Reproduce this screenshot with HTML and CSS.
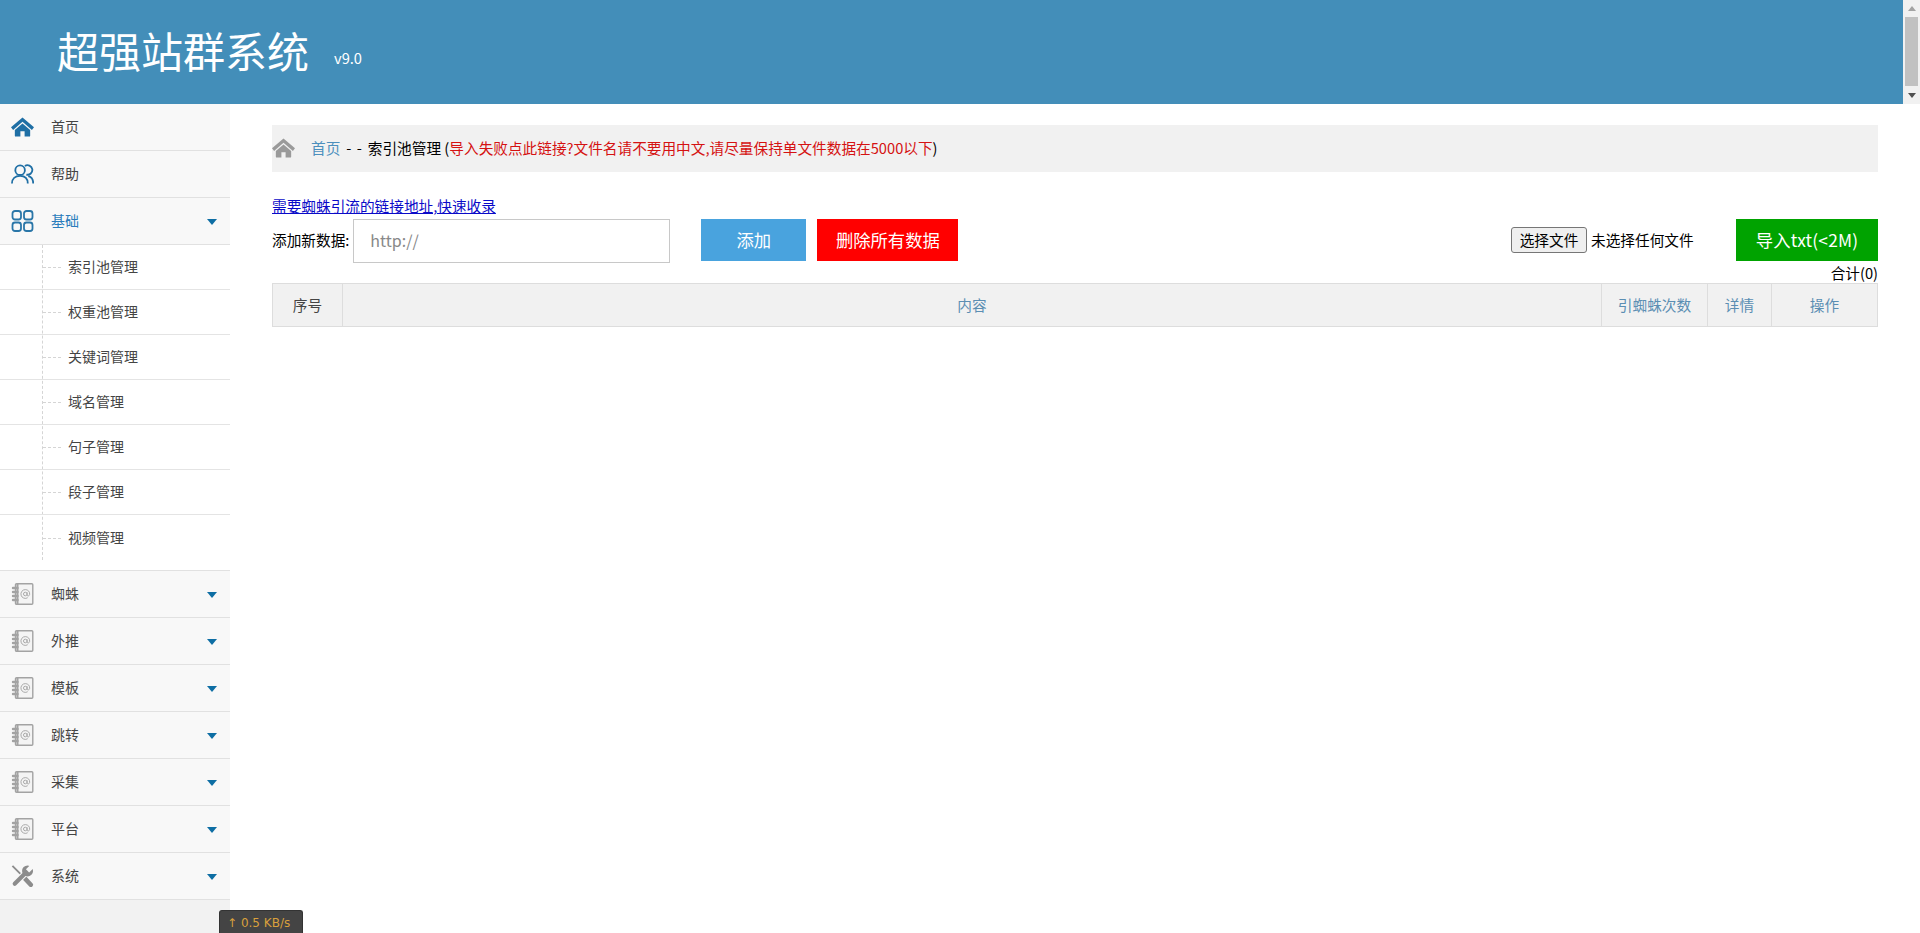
FILE: index.html
```html
<!DOCTYPE html>
<html lang="zh-CN">
<head>
<meta charset="utf-8">
<title>超强站群系统</title>
<link rel="stylesheet" href="styles.css">
</head>
<body>
<svg class="defs" width="0" height="0" aria-hidden="true">
  <symbol id="i-book" viewBox="0 0 22 22">
    <rect x="4" y="0.7" width="17.300" height="20.600" rx="1" fill="#f4f4f4" stroke="#a3a3a3" stroke-width="1.400"/>
    <path d="M6 1v20" stroke="#a3a3a3" stroke-width="2"/>
    <path d="M1.500 5h4.500M1.500 9h4.500M1.500 13h4.500M1.500 17h4.500" stroke="#a3a3a3" stroke-width="2.400" stroke-linecap="round"/>
    <circle cx="13.800" cy="11" r="1.800" fill="none" stroke="#aaa" stroke-width="1"/>
    <path d="M15.600 9.200v2.800c0 1.300 2.200 1.300 2.500-.4.500-2.700-1.500-5-4.300-5a4.400 4.400 0 1 0 2.400 8.100" fill="none" stroke="#aaa" stroke-width="1"/>
  </symbol>
  <symbol id="i-caret" viewBox="0 0 10 6"><path d="M0 0h10L5 6z" fill="#0e6ea4"/></symbol>
  <symbol id="i-home" viewBox="0 0 24 20">
    <path d="M12 0 0 10.300l2.200 2.700L12 4.600 21.800 13 24 10.300z"/>
    <path d="M12 6.300 4 13.200V19a1 1 0 0 0 1 1h4.800v-5.500h4.400V20H19a1 1 0 0 0 1-1v-5.800z"/>
  </symbol>
</svg>
<header class="top">
  <div class="brand"><span class="brand-name">超强站群系统</span><span class="brand-ver">v9.0</span></div>
  <div class="scrollbar">
    <span class="arrow-up"></span>
    <span class="thumb"></span>
    <span class="arrow-down"></span>
  </div>
</header>
<div class="body-wrap">
  <nav class="side">
    <a class="menu-item"><svg class="ico ico-blue"><use href="#i-home"/></svg><span class="menu-label">首页</span></a>
    <a class="menu-item"><svg class="ico" viewBox="0 0 24 20" fill="none" stroke="#1f6fa5" stroke-width="1.900"><circle cx="9.500" cy="6" r="5"/><path d="M14.500 1.600a5 5 0 1 1 1.500 9M1 20c0-5 3.300-8 8.500-8s8 3 8 8M18 12.200c3.300.7 5.200 3.600 5.200 7.800"/></svg><span class="menu-label">帮助</span></a>
    <a class="menu-item is-open"><svg class="ico" viewBox="0 0 22 22" fill="none" stroke="#2a76a8" stroke-width="1.800"><rect x="1" y="1" width="8.500" height="8.500" rx="2.500"/><rect x="12.500" y="1" width="8.500" height="8.500" rx="2.500"/><rect x="1" y="12.500" width="8.500" height="8.500" rx="2.500"/><rect x="12.500" y="12.500" width="8.500" height="8.500" rx="2.500"/></svg><span class="menu-label">基础</span><svg class="caret"><use href="#i-caret"/></svg></a>
    <ul class="submenu">
      <li class="sub-item"><span class="sub-dash"></span>索引池管理</li>
      <li class="sub-item"><span class="sub-dash"></span>权重池管理</li>
      <li class="sub-item"><span class="sub-dash"></span>关键词管理</li>
      <li class="sub-item"><span class="sub-dash"></span>域名管理</li>
      <li class="sub-item"><span class="sub-dash"></span>句子管理</li>
      <li class="sub-item"><span class="sub-dash"></span>段子管理</li>
      <li class="sub-item"><span class="sub-dash"></span>视频管理</li>
    </ul>
    <a class="menu-item"><svg class="ico"><use href="#i-book"/></svg><span class="menu-label">蜘蛛</span><svg class="caret"><use href="#i-caret"/></svg></a>
    <a class="menu-item"><svg class="ico"><use href="#i-book"/></svg><span class="menu-label">外推</span><svg class="caret"><use href="#i-caret"/></svg></a>
    <a class="menu-item"><svg class="ico"><use href="#i-book"/></svg><span class="menu-label">模板</span><svg class="caret"><use href="#i-caret"/></svg></a>
    <a class="menu-item"><svg class="ico"><use href="#i-book"/></svg><span class="menu-label">跳转</span><svg class="caret"><use href="#i-caret"/></svg></a>
    <a class="menu-item"><svg class="ico"><use href="#i-book"/></svg><span class="menu-label">采集</span><svg class="caret"><use href="#i-caret"/></svg></a>
    <a class="menu-item"><svg class="ico"><use href="#i-book"/></svg><span class="menu-label">平台</span><svg class="caret"><use href="#i-caret"/></svg></a>
    <a class="menu-item"><svg class="ico" viewBox="0 0 24 24"><path d="M1 1 13 13" stroke="#8c8c8c" stroke-width="2" fill="none"/><path d="M13 13 21 21.500" stroke="#8c8c8c" stroke-width="5" stroke-linecap="round" fill="none"/><path d="M3 21 15 9" stroke="#f8f8f8" stroke-width="7" fill="none"/><path d="M3.500 20.500 15 9" stroke="#8c8c8c" stroke-width="4.500" stroke-linecap="round" fill="none"/><circle cx="17.500" cy="6.500" r="6" fill="#8c8c8c"/><path d="M17.500 6.500 24 0" stroke="#f8f8f8" stroke-width="5" fill="none"/></svg><span class="menu-label">系统</span><svg class="caret"><use href="#i-caret"/></svg></a>
  </nav>
  <main class="main">
    <div class="crumb">
      <svg class="crumb-ico"><use href="#i-home"/></svg>
      <span class="crumb-link">首页</span><span class="crumb-sep">- -</span><span>索引池管理 (<span class="crumb-warn">导入失败点此链接?文件名请不要用中文,请尽量保持单文件数据在5000以下</span>)</span>
    </div>
    <a class="hint">需要蜘蛛引流的链接地址,快速收录</a>
    <div class="toolbar">
      <label class="add-label">添加新数据:</label>
      <input class="add-input" type="text" placeholder="http://">
      <button class="btn btn-blue" type="button">添加</button>
      <button class="btn btn-red" type="button">删除所有数据</button>
      <div class="file-box"><span class="file-btn">选择文件</span><span class="file-none">未选择任何文件</span></div>
      <button class="btn btn-green" type="button">导入txt(&lt;2M)</button>
    </div>
    <div class="total">合计(0)</div>
    <table class="grid">
      <thead>
        <tr>
          <th class="col-no">序号</th>
          <th class="col-link">内容</th>
          <th class="col-link col-count">引蜘蛛次数</th>
          <th class="col-link col-detail">详情</th>
          <th class="col-link col-op">操作</th>
        </tr>
      </thead>
    </table>
  </main>
</div>
<div class="speed"><span class="speed-arrow">↑</span> 0.5 KB/s</div>
</body>
</html>
```
FILE: styles.css
```css
* { box-sizing: border-box; }
html, body { margin: 0; height: 100%; overflow: hidden; }
body {
  width: 1920px;
  height: 933px;
  display: flex;
  flex-direction: column;
  background: #fff;
  color: #000;
  font: 14px/20px "Noto Sans CJK SC", "Liberation Sans", sans-serif;
  position: relative;
}
.defs { position: absolute; }

.top {
  height: 104px;
  flex: none;
  background: #438eb9;
  display: flex;
  justify-content: space-between;
  color: #fff;
}
.brand { padding: 23px 0 0 57px; display: flex; align-items: baseline; height: 104px; }
.brand-name { font-size: 42px; line-height: 54px; font-weight: 400; }
.brand-ver { font-size: 14.670px; margin-left: 25px; position: relative; top: -4px; }
.scrollbar { width: 17px; background: #f1f1f1; display: flex; flex-direction: column; align-items: center; position: relative; padding: 6px 0 0; }
.arrow-up { width: 0; height: 0; border-style: solid; border-color: transparent transparent #a3a3a3; border-width: 0 4px 5px; }
.thumb { width: 13px; height: 69px; background: #c1c1c1; margin-top: 6px; flex: none; }
.arrow-down { width: 0; height: 0; border-style: solid; border-color: #505050 transparent transparent; border-width: 5px 4px 0; margin-top: 7px; }

.body-wrap { flex: 1; display: flex; min-height: 0; }

.side { width: 230px; flex: none; background: #f2f2f2; display: flex; flex-direction: column; }
.menu-item {
  height: 47px;
  flex: none;
  display: flex;
  align-items: center;
  background: #f8f8f8;
  border-bottom: 1px solid #e1e1e1;
  color: #444;
  padding: 0 0 0 11px;
  position: relative;
}
.is-open .menu-label { color: #2b7dbc; }
.ico { width: 23px; height: 22px; flex: none; }
.ico-blue { fill: #1f6fa5; }
.menu-label { margin: 0 0 2px 17px; }
.caret { width: 10px; height: 6px; position: absolute; right: 13px; top: 21px; }

.submenu { list-style: none; margin: 0; padding: 0 0 10px; background: #fff; border-bottom: 1px solid #e1e1e1; position: relative; }
.submenu::before { content: ""; position: absolute; left: 42px; top: 0; bottom: 10px; border-left: 1px dashed #d5d5d5; }
.sub-item { height: 45px; display: flex; align-items: center; padding: 0 0 2px 68px; color: #444; border-bottom: 1px solid #e4e4e4; position: relative; }
.sub-item:last-child { border-bottom: 0; }
.sub-dash { position: absolute; left: 43px; top: 50%; width: 18px; border-top: 1px dashed #d5d5d5; }

.main { flex: 1; padding: 21px 42px 0; min-width: 0; font-size: 14.670px; }
.crumb { height: 47px; background: #f1f1f1; display: flex; align-items: center; padding-bottom: 2px; }
.crumb-ico { width: 23px; height: 20px; margin-right: 16px; flex: none; fill: #9a9a9a; }
.crumb-link { color: #4c8fbd; }
.crumb-sep { margin: 0 5px; word-spacing: 2px; padding: 0 1px; }
.crumb-warn { color: #d51212; }

.hint { display: block; margin-top: 24px; height: 20px; color: #0a0ac8; text-decoration: underline; line-height: 20px; width: max-content; }
.toolbar { display: flex; align-items: flex-start; margin-top: 3px; height: 44px; }
.add-label { line-height: 42px; margin-right: 4px; }
.add-input { width: 317px; height: 44px; border: 1px solid #c8c8c8; padding: 0 16px 2px; font: 16px "Noto Sans CJK SC", "Liberation Sans", sans-serif; color: #333; background: #fff; outline: 0; }
.add-input::placeholder { color: #888; }
.btn { height: 42px; border: 0; color: #fff; font: 17.330px/42px "Noto Sans CJK SC", "Liberation Sans", sans-serif; padding: 0; }
.btn-blue { width: 105px; margin-left: 31px; background: #49a3de; }
.btn-red { width: 141px; margin-left: 11px; background: #ff0000; }
.btn-green { width: 142px; background: #00a300; margin-left: 42px; letter-spacing: .2px; }
.file-box { margin-left: auto; display: flex; align-items: center; height: 42px; }
.file-btn { width: 76px; height: 26px; background: #efefef; border: 1px solid #767676; border-radius: 3px; text-align: center; line-height: 24px; margin-right: 4px; }
.file-none { width: 103px; }

.total { text-align: right; line-height: 20px; height: 20px; }

.grid { width: 100%; table-layout: fixed; border-collapse: collapse; border: 1px solid #ddd; height: 44px; }
.grid th { background: #f1f1f1; border: 1px solid #ddd; font-weight: 400; padding: 0; height: 43px; }
.col-no { width: 70px; color: #444; }
.col-link { color: #5b8eb3; }
.col-count { width: 106px; }
.col-detail { width: 64px; }
.col-op { width: 106px; }

.speed {
  position: absolute;
  left: 219px;
  top: 910px;
  width: 84px;
  height: 23px;
  background: #444;
  border: 1px solid #333;
  border-bottom: 0;
  border-radius: 3px 3px 0 0;
  color: #d9a03c;
  font: 12px/24px "DejaVu Sans", sans-serif;
  padding-left: 7px;
  white-space: nowrap;
}
```
